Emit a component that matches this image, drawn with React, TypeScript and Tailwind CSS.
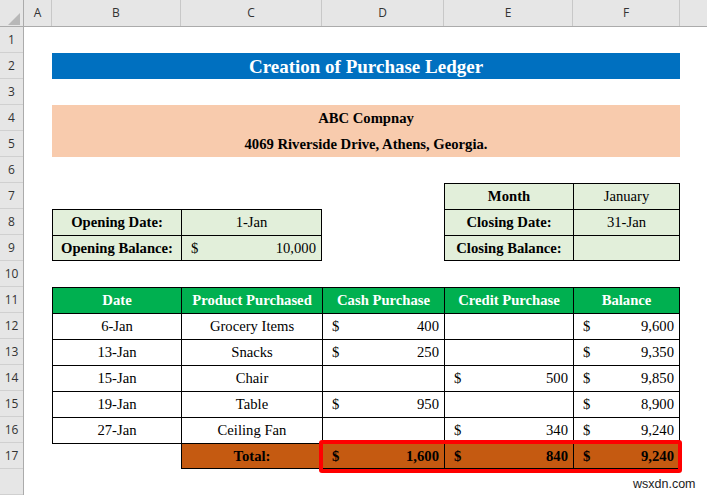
import React from 'react'

const cols = [
  { key: 'A', w: 'w-[28px]' },
  { key: 'B', w: 'w-[129px]' },
  { key: 'C', w: 'w-[141px]' },
  { key: 'D', w: 'w-[122px]' },
  { key: 'E', w: 'w-[129px]' },
  { key: 'F', w: 'w-[107px]' },
]

const rows = [
  { date: '6-Jan', item: 'Grocery Items', cash: '400', credit: '', bal: '9,600' },
  { date: '13-Jan', item: 'Snacks', cash: '250', credit: '', bal: '9,350' },
  { date: '15-Jan', item: 'Chair', cash: '', credit: '500', bal: '9,850' },
  { date: '19-Jan', item: 'Table', cash: '950', credit: '', bal: '8,900' },
  { date: '27-Jan', item: 'Ceiling Fan', cash: '', credit: '340', bal: '9,240' },
]

function Money({ value, className = '' }: { value: string; className?: string }) {
  if (!value) return <div className={className} />
  return (
    <div className={`flex items-center justify-between pl-[9px] pr-[5px] ${className}`}>
      <span>$</span>
      <span>{value}</span>
    </div>
  )
}

export default function App() {
  return (
    <div className="relative w-[707px] h-[495px] overflow-hidden bg-white text-black">
      {/* column headers */}
      <div className="flex h-[27px] bg-[#e6e6e6] border-b border-[#ababab] text-[12px] text-[#333] font-['Open_Sans','Liberation_Sans',sans-serif]">
        <div className="relative w-[24px] shrink-0 border-r border-[#ababab]">
          <svg className="absolute left-[8px] top-[13px]" width="12" height="12" viewBox="0 0 12 12">
            <polygon points="12,0 12,12 0,12" fill="#b8b8b8" />
          </svg>
        </div>
        {cols.map((c) => (
          <div
            key={c.key}
            className={`${c.w} shrink-0 flex items-center justify-center border-r border-[#c8c8c8]`}
          >
            {c.key}
          </div>
        ))}
        <div className="flex-1" />
      </div>

      <div className="flex">
        {/* row headers */}
        <div className="w-[24px] shrink-0 flex flex-col bg-[#e6e6e6] border-r border-[#ababab] text-[12px] text-[#333] font-['Open_Sans','Liberation_Sans',sans-serif]">
          {Array.from({ length: 18 }, (_, i) => (
            <div
              key={i}
              className="h-[26px] shrink-0 flex items-center justify-center border-b border-[#d0d0d0]"
            >
              {i < 17 ? i + 1 : ''}
            </div>
          ))}
        </div>

        {/* sheet */}
        <div className="grid grid-cols-[28px_129px_141px_122px_129px_107px_1fr] grid-rows-[repeat(18,26px)] text-[14.67px] leading-none font-['Liberation_Serif','Tinos','Times_New_Roman','DejaVu_Serif',serif]">
          {/* title */}
          <div className="row-start-2 col-start-2 col-span-5 bg-[#0070c0] flex items-center justify-center text-white font-bold text-[19px]">
            Creation of Purchase Ledger
          </div>

          {/* company */}
          <div className="row-start-4 row-span-2 col-start-2 col-span-5 bg-[#f8cbad] flex flex-col font-bold">
            <div className="h-[26px] flex items-center justify-center">ABC Compnay</div>
            <div className="h-[26px] flex items-center justify-center">4069 Riverside Drive, Athens, Georgia.</div>
          </div>

          {/* opening */}
          <div className="row-start-8 row-span-2 col-start-2 col-span-2 grid grid-cols-[129px_1fr] grid-rows-[26px_26px] bg-[#e2efda]">
            <div className="border-l border-t border-black flex items-center justify-center font-bold">Opening Date:</div>
            <div className="border-l border-t border-r border-black flex items-center justify-center">1-Jan</div>
            <div className="border-l border-t border-b border-black flex items-center justify-center font-bold">Opening Balance:</div>
            <Money value="10,000" className="border-l border-t border-r border-b border-black" />
          </div>

          {/* month */}
          <div className="row-start-7 row-span-3 col-start-5 col-span-2 grid grid-cols-[129px_1fr] grid-rows-[26px_26px_26px] bg-[#e2efda]">
            <div className="border-l border-t border-black flex items-center justify-center font-bold">Month</div>
            <div className="border-l border-t border-r border-black flex items-center justify-center">January</div>
            <div className="border-l border-t border-black flex items-center justify-center font-bold">Closing Date:</div>
            <div className="border-l border-t border-r border-black flex items-center justify-center">31-Jan</div>
            <div className="border-l border-t border-b border-black flex items-center justify-center font-bold">Closing Balance:</div>
            <div className="border-l border-t border-r border-b border-black" />
          </div>

          {/* ledger */}
          <div className="relative row-start-11 row-span-7 col-start-2 col-span-5 grid grid-cols-[129px_141px_122px_129px_1fr] grid-rows-[repeat(7,26px)]">
            {['Date', 'Product Purchased', 'Cash Purchase', 'Credit Purchase', 'Balance'].map((h, i) => (
              <div
                key={h}
                className={`bg-[#00b050] text-white font-bold flex items-center justify-center border-l border-t border-black ${i === 4 ? 'border-r' : ''}`}
              >
                {h}
              </div>
            ))}
            {rows.map((r) => (
              <React.Fragment key={r.date}>
                <div className="border-l border-t border-black flex items-center justify-center">{r.date}</div>
                <div className="border-l border-t border-black flex items-center justify-center">{r.item}</div>
                <Money value={r.cash} className="border-l border-t border-black" />
                <Money value={r.credit} className="border-l border-t border-black" />
                <Money value={r.bal} className="border-l border-t border-r border-black" />
              </React.Fragment>
            ))}
            <div className="border-t border-black" />
            <div className="bg-[#c55a11] font-bold border-l border-t border-b border-black flex items-center justify-center">
              Total:
            </div>
            <Money value="1,600" className="bg-[#c55a11] font-bold border-l border-t border-b border-black" />
            <Money value="840" className="bg-[#c55a11] font-bold border-l border-t border-b border-black" />
            <Money value="9,240" className="bg-[#c55a11] font-bold border-l border-t border-r border-b border-black" />

            <div className="absolute left-[267px] top-[153px] w-[363px] h-[33px] border-4 border-[#ff0000] rounded-[3px] pointer-events-none" />
          </div>
        </div>
      </div>

      <div className="absolute left-[633px] top-[475px] text-[12.5px] text-[#222] font-['Liberation_Sans',Arial,sans-serif]">
        wsxdn.com
      </div>
    </div>
  )
}
